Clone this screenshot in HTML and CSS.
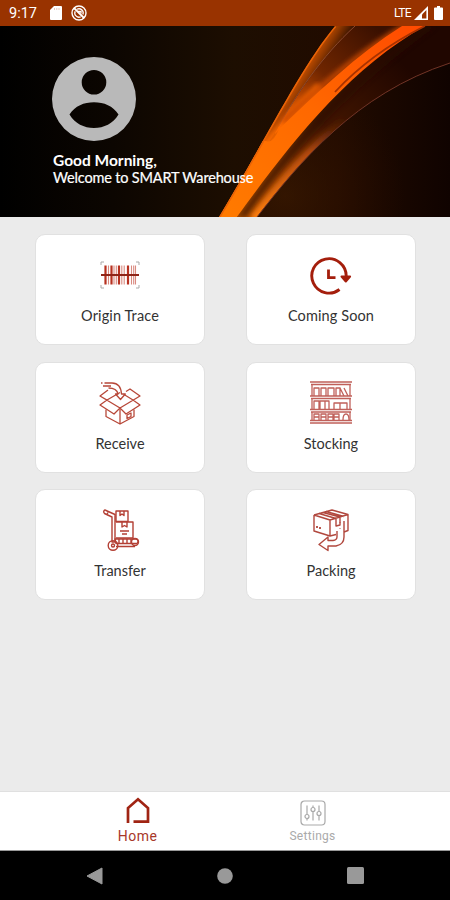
FILE: index.html
```html
<!DOCTYPE html>
<html lang="en">
<head>
    <meta charset="utf-8">
    <meta name="viewport" content="width=device-width,initial-scale=1">
    <title>SMART Warehouse</title>
    <link rel="stylesheet" href="styles.css">
</head>
<body>
<div class="app">
    <header class="status">
        <span class="time">9:17</span>
        <svg class="sd" width="12" height="14" viewBox="0 0 12 14"><path d="M4 0h7q1 0 1 1v12q0 1-1 1H1q-1 0-1-1V4z" fill="#fff"/><path d="M4.500 2v2M6.800 2v2M9 2v2" stroke="#e7c9bb" stroke-width="1"/></svg>
        <svg class="sync" width="16" height="16" viewBox="0 0 16 16" fill="none" stroke="#fff"><circle cx="8" cy="8" r="7" stroke-width="1.400"/><path d="M3 3l10 10" stroke-width="1.800"/><path d="M6 4.300a4.200 4.200 0 0 1 5.900 5.200M4.200 6.200a4.200 4.200 0 0 0 5.500 5.600M7 6.500h3v2" stroke-width="1.300"/></svg>
        <span class="lte">LTE</span>
        <svg class="signal" width="14" height="14" viewBox="0 0 14 14"><path d="M14 0v14H0z" fill="#fff"/><path d="M12.400 4v8.400H8V8.400z" fill="#993300"/></svg>
        <svg class="battery" width="9" height="14" viewBox="0 0 9 14"><path d="M3 0h3v1.500h2q1 0 1 1V13q0 1-1 1H1q-1 0-1-1V2.500q0-1 1-1h2z" fill="#fff"/></svg>
    </header>

    <section class="hero">
        <svg class="hero-bg" width="450" height="191" viewBox="0 0 450 191">
            <defs>
                <linearGradient id="bg">
                    <stop offset="0" stop-color="#000"/>
                    <stop offset=".25" stop-color="#0c0601"/>
                    <stop offset=".52" stop-color="#1d0e01"/>
                    <stop offset=".75" stop-color="#210b00"/>
                    <stop offset="1" stop-color="#100300"/>
                </linearGradient>
                <linearGradient id="main" gradientUnits="userSpaceOnUse" x1="230" y1="191" x2="420" y2="0">
                    <stop offset="0" stop-color="#ff7a00"/>
                    <stop offset=".5" stop-color="#ff6800"/>
                    <stop offset="1" stop-color="#ff4a00"/>
                </linearGradient>
                <linearGradient id="left" gradientUnits="userSpaceOnUse" x1="298" y1="52" x2="316" y2="63">
                    <stop offset="0" stop-color="#c85000"/>
                    <stop offset=".45" stop-color="#8a3600"/>
                    <stop offset="1" stop-color="#361200"/>
                </linearGradient>
                <linearGradient id="mid" gradientUnits="userSpaceOnUse" x1="280" y1="102" x2="375" y2="0">
                    <stop offset="0" stop-color="#f06000"/>
                    <stop offset=".25" stop-color="#b84600"/>
                    <stop offset=".5" stop-color="#6e2500"/>
                    <stop offset="1" stop-color="#3a1000"/>
                </linearGradient>
                <linearGradient id="low" gradientUnits="userSpaceOnUse" x1="245" y1="191" x2="405" y2="40">
                    <stop offset="0" stop-color="#b45000"/>
                    <stop offset=".3" stop-color="#863500"/>
                    <stop offset=".55" stop-color="#431600"/>
                    <stop offset="1" stop-color="#200600"/>
                </linearGradient>
                <linearGradient id="rim" gradientUnits="userSpaceOnUse" x1="255" y1="191" x2="350" y2="88">
                    <stop offset="0" stop-color="#ff8010"/>
                    <stop offset=".6" stop-color="#b54a08"/>
                    <stop offset="1" stop-color="#5a2413" stop-opacity="0"/>
                </linearGradient>
                <radialGradient id="glow" gradientUnits="userSpaceOnUse" cx="285" cy="170" r="120">
                    <stop offset="0" stop-color="#3a1800" stop-opacity=".75"/>
                    <stop offset="1" stop-color="#300f00" stop-opacity="0"/>
                </radialGradient>
                <filter id="soft"><feGaussianBlur stdDeviation="2.500"/></filter>
                <clipPath id="lower"><path d="M237 191C285 112 345 45 425 0H450V37C355 68 300 136 257 191z"/></clipPath>
                <clipPath id="upper"><path d="M219 191C262 120 300 42 335 0H425C345 45 285 125 237 191z"/></clipPath>
            </defs>
            <rect width="450" height="191" fill="url(#bg)"/>
            <path d="M257 191C300 136 355 68 450 37V191z" fill="url(#glow)"/>
            <path d="M237 191C285 112 345 45 425 0H450V37C355 68 300 136 257 191z" fill="url(#low)"/>
            <g clip-path="url(#lower)">
                <path d="M237 191C285 125 345 45 425 0H436C356 58 292 125 247 191z" fill="#2a0d00" opacity=".6" filter="url(#soft)"/>
                <path d="M254 194C284 153 310 124 345 95" fill="none" stroke="url(#rim)" stroke-width="10" filter="url(#soft)"/>
            </g>
            <path d="M257 191C300 136 355 68 450 37" fill="none" stroke="#713426" stroke-width="1"/>
            <g clip-path="url(#upper)">
                <path d="M219 191C262 120 300 42 335 0H355C319 34 293 74 275 107z" fill="url(#left)"/>
                <path d="M275 107C293 74 319 34 355 0H402C355 29 315 70 275 108z" fill="url(#mid)"/>
                <path d="M279 100C295 70 322 30 355 0" fill="none" stroke="#8c482c" stroke-width="1"/>
                <path d="M264 124L296 88L322 62" fill="none" stroke="#ff6c00" stroke-width="14" filter="url(#soft)" opacity=".9"/>
                <path d="M283 96C318 62 358 27 405 0" fill="none" stroke="#c64600" stroke-width="5" filter="url(#soft)"/>
                <path d="M210 191V115H266Q273 118 279 103C317 67 356 29 402 0H425V191z" fill="url(#main)"/>
                <path d="M219 191C262 120 300 42 335 0" fill="none" stroke="#e86206" stroke-width="3"/>
            </g>
            <path d="M335 66C362 37 391 17 425 0" fill="none" stroke="#a83200" stroke-width="1.800"/>
        </svg>
        <svg class="avatar" width="84" height="84" viewBox="0 0 84 84"><path fill="#b9b9b9" fill-rule="evenodd" d="M42 0a42 42 0 1 1 0 84a42 42 0 1 1 0-84zM42 13a12.300 12.300 0 1 0 0 24.600a12.300 12.300 0 1 0 0-24.600zM17.500 57.500C23 49 32 45.300 42 45.300S61 49 66.500 57.500C61 66.500 52 71 42 71S23 66.500 17.500 57.500z"/></svg>
        <div class="greeting">Good Morning,</div>
        <div class="welcome">Welcome to SMART Warehouse</div>
    </section>

    <main class="grid">
        <div class="card">
            <svg class="icon" width="44" height="44" viewBox="0 0 44 44" fill="none">
                <path d="M3 12V9h3M38 9h3v3M3 32v3h3M38 35h3v-3" stroke="#a9a9a9"/>
                <path d="M7.500 12.500v19M13.500 12.500v19M21 12.500v19M30 12.500v19" stroke="#b7301f" stroke-width="2.200"/>
                <path d="M10.500 12.500v19M16 12.500v19M18.300 12.500v19M23.800 12.500v19M26.200 12.500v19M33.500 12.500v19M35.700 12.500v19M37.500 12.500v19" stroke="#d98a80" stroke-width="1.100"/>
                <path d="M3 22h38" stroke="#8f2417" stroke-width="1.800"/>
            </svg>
            <span class="name trace">Origin Trace</span>
        </div>
        <div class="card">
            <svg class="icon" width="44" height="44" viewBox="0 0 44 44" fill="none" stroke="#a41e0c" stroke-width="2.900">
                <path d="M30.500 36.500A17.200 17.200 0 1 1 37.200 23"/>
                <path d="M19.500 16.500v8.200h7" stroke-width="2.800"/>
                <path d="M32.500 23.500h8.600l-4.300 5z" fill="#a41e0c" stroke-width="2" stroke-linejoin="round"/>
            </svg>
            <span class="name soon">Coming Soon</span>
        </div>
        <div class="card">
            <svg class="icon" width="44" height="44" viewBox="0 0 44 44" fill="none" stroke="#b74738" stroke-width="1.300" stroke-linejoin="round">
                <path d="M3 2h1.500M6.500 2H14C20 2 23 6 23.500 13h3.800L22.500 18.500 17.500 13H20C19 8 15.500 7 10.500 7M5 5h8"/>
                <path d="M10 9L2 15l20 12 20-12-10-7-4 2.500M2 15l7 4M9 19l13-7.500M35 19l-9-5.500M9 19l-7 5 14 9 6-6 6 6 14-9-7-5"/>
                <path d="M8 28.500v7L22 43l14-7.500v-7M22 27v16M29 34l4-2v3.500l-4 2z"/>
            </svg>
            <span class="name receive">Receive</span>
        </div>
        <div class="card">
            <svg class="icon" width="44" height="44" viewBox="0 0 44 44" fill="none" stroke="#c0605a" stroke-width="1.300" stroke-linejoin="round">
                <path d="M1 1h42M2 3.500h40M1 15h42M2 17.500h40M1 28.500h42M2 31h40M1 39.500h42M1 42h42"/>
                <path d="M3 4v11M41 4v11M3 18v10M41 18v10M3 31v8M41 31v8"/>
                <path d="M5 15V7h5v8M12 15V7h5v8M19 15V7h6v8M27 15V7h4v8M31 7l4 8M35 7l4 8M5 28v-8h5v8M11 28v-8h5v8M16 28v-8h4v8M25 28v-6h6v6M31 28v-6h7v6M5 39v-6h5v6M12 39v-6h5v6M19 39v-6h5v6M25 39v-6h5v6M34 39c0-4 1-6 3-6s3 2 3 6M5 36h5M12 36h5M19 36h5M25 36h5"/>
            </svg>
            <span class="name stocking">Stocking</span>
        </div>
        <div class="card">
            <svg class="icon" width="44" height="44" viewBox="0 0 44 44" fill="none" stroke="#b33f34" stroke-width="1.400" stroke-linejoin="round">
                <path d="M8 2.500l9 4V34h-3V9L6.500 5.500Q5 4 6 2.700T8 2.500zM10 4.500L8.500 7"/>
                <path d="M18 3h12v10.500H18zM22 3v4.500l2-1.500 2 1.500V3M18 14h17v16H18M24 14v5l2.500-1.500L29 19v-5M22 23h9M24 26h5"/>
                <path d="M17 31h21q2 0 2 2.300T38 35.500H18zM21 31v4.500M25 31v4.500M29 31v4.500M33 31v4.500M18 38.500h19"/>
                <circle cx="15" cy="37.500" r="4.800"/><circle cx="15" cy="37.500" r="1.500"/>
                <circle cx="37" cy="34" r="3.500"/>
            </svg>
            <span class="name transfer">Transfer</span>
        </div>
        <div class="card">
            <svg class="icon" width="44" height="44" viewBox="0 0 44 44" fill="none" stroke="#b1483e" stroke-width="1.400" stroke-linejoin="round">
                <path d="M5 7L23 2l16 4.500v16L35 24M5 7l16 5 18-5.500M5 7v16l16 5V12M21 28l6-1.500M10 5.500l17 5V18l4-1v-8L14 4.500M17 3.500l18 5"/>
                <path d="M8 18v2M11 19v2M31 14v.5M31 20v.5" stroke-width="1.800"/>
                <path d="M28 23v6q0 3-4 3.500h-5V29l-9 7.500 9 6V38h8q8-1.500 8-9V13"/>
            </svg>
            <span class="name packing">Packing</span>
        </div>
    </main>

    <nav class="tabs">
        <div class="tab home">
            <svg width="26" height="28" viewBox="0 0 26 28" fill="none" stroke="#a02413" stroke-width="2.700"><path d="M3 26V11l10-8.700L23 11v13.700H8.500"/></svg>
            <span>Home</span>
        </div>
        <div class="tab settings">
            <svg width="26" height="26" viewBox="0 0 26 26" fill="none" stroke="#a9a9a9" stroke-width="1.200"><rect x="1" y="1" width="24" height="24" rx="3.500"/><path d="M7 5.500v9M7 18.500v2M13 5.500v2M13 12v8.500M19 5.500v6M19 15.500v5"/><circle cx="7" cy="16.500" r="2"/><circle cx="13" cy="9.500" r="2"/><circle cx="19" cy="13.500" r="2"/></svg>
            <span>Settings</span>
        </div>
    </nav>

    <footer class="system">
        <svg width="17" height="18" viewBox="0 0 17 18"><path d="M16 1v16L1 9z" fill="#999" stroke="#999" stroke-linejoin="round"/></svg>
        <svg width="16" height="16" viewBox="0 0 16 16"><circle cx="8" cy="8" r="7.800" fill="#999"/></svg>
        <svg width="17" height="17" viewBox="0 0 17 17"><rect width="17" height="17" rx="1.500" fill="#999"/></svg>
    </footer>
</div>
</body>
</html>
```

FILE: styles.css
```css
*{
    box-sizing: border-box;
}
body{
    margin: 0;
    font-family: Lato, "Open Sans", sans-serif;
    background: #ebebeb;
}
svg{
    display: block;
    flex: none;
}
.app{
    display: flex;
    flex-direction: column;
    width: 450px;
    height: 900px;
    overflow: hidden;
}

/* android status bar */
.status{
    display: flex;
    align-items: center;
    height: 26px;
    padding: 0 7px 0 9px;
    background: #993300;
    color: #fff;
    font-family: Roboto, sans-serif;
}
.time{
    width: 41px;
    font-size: 14.5px;
}
.sync{
    margin-left: 9px;
}
.lte{
    margin-left: auto;
    font-size: 12px;
    letter-spacing: -0.6px;
}
.signal{
    margin-left: 3px;
}
.battery{
    margin-left: 6px;
}

/* greeting banner */
.hero{
    position: relative;
    height: 191px;
    padding: 31px 0 0 52px;
    color: #fff;
    white-space: nowrap;
}
.hero-bg{
    position: absolute;
    left: 0;
    top: 0;
}
.avatar{
    position: relative;
}
.greeting, .welcome{
    position: relative;
    padding-left: 1px;
    line-height: 18px;
}
.greeting{
    margin-top: 10px;
    font-size: 15.5px;
    font-weight: bold;
}
.welcome{
    font-size: 14.5px;
    letter-spacing: -0.17px;
    -webkit-text-stroke: 0.2px #fff;
}

/* menu cards */
.grid{
    flex: 1;
    display: grid;
    grid-template-columns: 170px 170px;
    grid-auto-rows: 111px;
    gap: 16.5px 41px;
    padding: 17px 0 0 35px;
    background: #ebebeb;
    align-content: start;
}
.card{
    display: flex;
    flex-direction: column;
    align-items: center;
    padding-top: 18px;
    border: 1px solid #e1e1e1;
    border-radius: 10px;
    background: #fff;
}
.icon{
    margin-right: 1px;
}
.name{
    margin-top: 9px;
    line-height: 20px;
    font-size: 14.5px;
    color: #333;
}
.trace, .soon{
    letter-spacing: 0.12px;
}

/* bottom tabs */
.tabs{
    display: flex;
    justify-content: center;
    height: 60px;
    padding-top: 5px;
    border-top: 1px solid #e0e0e0;
    border-bottom: 1px solid #999;
    background: #fff;
    font-family: Roboto, sans-serif;
}
.tab{
    display: flex;
    flex-direction: column;
    align-items: center;
    width: 175px;
    line-height: 16px;
}
.home{
    color: #a83829;
    font-size: 14px;
    letter-spacing: 0.5px;
}
.home span{
    margin-top: 3px;
}
.settings{
    padding-top: 3px;
    color: #aaa;
    font-size: 12px;
    letter-spacing: 0.3px;
}
.settings span{
    margin-top: 2px;
}

.system{
    display: flex;
    justify-content: space-between;
    align-items: center;
    height: 49px;
    padding: 0 86px;
    background: #000;
}
```
